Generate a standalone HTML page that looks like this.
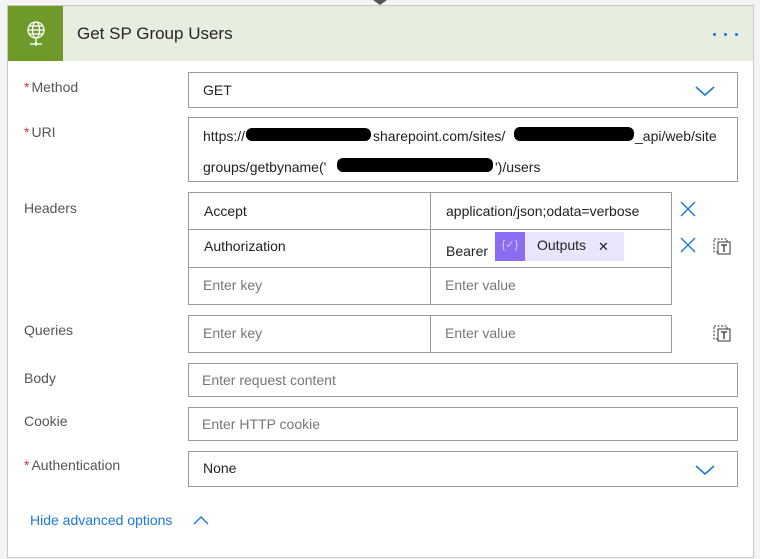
<!DOCTYPE html>
<html><head><style>
body{margin:0;width:760px;height:559px;background:#f4f4f4;font-family:"Segoe UI","Liberation Sans",sans-serif;font-size:14px;color:#333;position:relative;overflow:hidden}
.card{position:absolute;left:7px;top:5px;width:747px;height:553px;background:#fff;border:1px solid #c8c8c8;box-sizing:border-box}
.hdr{position:absolute;left:0;top:0;width:745px;height:55px;background:#e7eedf}
.ico{position:absolute;left:0;top:0;width:55px;height:55px;background:#6f9a2a}
.title{position:absolute;left:69px;top:18px;font-size:17px;color:#252525}
.dots{position:absolute;left:705px;top:27px;height:3px;line-height:0}
.dots i{display:inline-block;width:3px;height:3px;background:#1a7ad6;border-radius:50%;margin-right:8px;vertical-align:top}
.lbl{position:absolute;left:24px;font-size:14px;color:#555}
.lbl b{color:#d13438;font-weight:normal;margin-right:2px}
.box{position:absolute;left:188px;width:550px;border:1px solid #9a9a9a;box-sizing:border-box;background:#fff}
.t{position:absolute;font-size:14px;color:#222;white-space:pre}
.ph{color:#777}
.cell{position:absolute;border:1px solid #9a9a9a;box-sizing:border-box}
.blk{position:absolute;background:#000;border-radius:6px}
</style></head><body>
<div class="card">
 <div class="hdr">
  <div class="ico"><svg width="55" height="55" viewBox="0 0 55 55"><g fill="none" stroke="#fff" stroke-width="1.3"><circle cx="28" cy="24" r="8"/><ellipse cx="28" cy="24" rx="3.5" ry="8"/><line x1="20" y1="24" x2="36" y2="24"/><line x1="21" y1="20" x2="35" y2="20"/><line x1="21" y1="28" x2="35" y2="28"/><line x1="28" y1="32" x2="28" y2="37"/><line x1="22" y1="38" x2="34" y2="38"/></g><circle cx="28" cy="38" r="1.6" fill="#fff"/></svg></div>
  <div class="title">Get SP Group Users</div>
  <div class="dots"><i></i><i></i><i></i></div>
 </div>
</div>
<div class="lbl" style="top:79px"><b>*</b>Method</div>
<div class="box" style="top:72px;height:36px"><span class="t" style="left:14px;top:9px">GET</span>
<svg style="position:absolute;left:505px;top:11px" width="22" height="14"><polyline points="2,3 11,11 20,3" fill="none" stroke="#1a7ad6" stroke-width="1.6"/></svg></div>
<div class="lbl" style="top:124px"><b>*</b>URI</div>
<div class="box" style="top:117px;height:65px"><span class="t" style="left:14px;top:10px">https://</span><span class="t" style="left:184px;top:10px">sharepoint.com/sites/</span><span class="t" style="left:446px;top:10px">_api/web/site</span><span class="t" style="left:14px;top:41px">groups/getbyname('</span><span class="t" style="left:306px;top:41px">')/users</span></div>
<div class="blk" style="left:246px;top:128px;width:125px;height:13px"></div>
<div class="blk" style="left:514px;top:127px;width:120px;height:14px"></div>
<div class="blk" style="left:337px;top:158px;width:156px;height:14px"></div>
<div class="lbl" style="top:200px">Headers</div>
<div class="cell" style="left:188px;top:192px;width:243px;height:38px"><span class="t" style="left:15px;top:10px">Accept</span></div>
<div class="cell" style="left:430px;top:192px;width:242px;height:38px"><span class="t" style="left:15px;top:10px">application/json;odata=verbose</span></div>
<div class="cell" style="left:188px;top:229px;width:243px;height:39px"><span class="t" style="left:15px;top:8px">Authorization</span></div>
<div class="cell" style="left:430px;top:229px;width:242px;height:39px"><span class="t" style="left:15px;top:13px">Bearer</span>
<div style="position:absolute;left:64px;top:2px;width:129px;height:29px;background:#e9e5fd"><div style="position:absolute;left:0;top:0;width:30px;height:29px;background:#8c6cf0;color:#d8ccff;font-size:11px;text-align:center;line-height:27px">{✓}</div><span class="t" style="left:42px;top:5px">Outputs</span><span class="t" style="left:103px;top:7px;font-size:13px">✕</span></div></div>
<div class="cell" style="left:188px;top:267px;width:243px;height:38px"><span class="t ph" style="left:14px;top:9px">Enter key</span></div>
<div class="cell" style="left:430px;top:267px;width:242px;height:38px"><span class="t ph" style="left:14px;top:9px">Enter value</span></div>
<svg style="position:absolute;left:679px;top:200px" width="18" height="18"><path d="M2 2L16 16M16 2L2 16" stroke="#1a7ad6" stroke-width="1.4"/></svg>
<svg style="position:absolute;left:679px;top:236px" width="18" height="18"><path d="M2 2L16 16M16 2L2 16" stroke="#1a7ad6" stroke-width="1.4"/></svg>
<svg style="position:absolute;left:712px;top:236px" width="20" height="20"><rect x="2" y="3" width="13" height="13" fill="none" stroke="#333" stroke-dasharray="2,1.5"/><rect x="6" y="6" width="12" height="12" fill="#fff" stroke="#333"/><path d="M9 9H15M12 9V16" stroke="#333" stroke-width="1.3"/></svg>
<div class="lbl" style="top:322px">Queries</div>
<div class="cell" style="left:188px;top:315px;width:243px;height:38px"><span class="t ph" style="left:14px;top:9px">Enter key</span></div>
<div class="cell" style="left:430px;top:315px;width:242px;height:38px"><span class="t ph" style="left:14px;top:9px">Enter value</span></div>
<svg style="position:absolute;left:712px;top:323px" width="20" height="20"><rect x="2" y="3" width="13" height="13" fill="none" stroke="#333" stroke-dasharray="2,1.5"/><rect x="6" y="6" width="12" height="12" fill="#fff" stroke="#333"/><path d="M9 9H15M12 9V16" stroke="#333" stroke-width="1.3"/></svg>
<div class="lbl" style="top:370px">Body</div>
<div class="box" style="top:363px;height:34px"><span class="t ph" style="left:13px;top:8px">Enter request content</span></div>
<div class="lbl" style="top:413px">Cookie</div>
<div class="box" style="top:407px;height:34px"><span class="t ph" style="left:13px;top:8px">Enter HTTP cookie</span></div>
<div class="lbl" style="top:457px"><b>*</b>Authentication</div>
<div class="box" style="top:451px;height:36px"><span class="t" style="left:14px;top:8px">None</span>
<svg style="position:absolute;left:505px;top:11px" width="22" height="14"><polyline points="2,3 11,11 20,3" fill="none" stroke="#1a7ad6" stroke-width="1.6"/></svg></div>
<div style="position:absolute;left:30px;top:512px;color:#1a7ad6;font-size:14px">Hide advanced options</div>
<svg style="position:absolute;left:192px;top:514px" width="18" height="12"><polyline points="2,10 9,3 16,10" fill="none" stroke="#1a7ad6" stroke-width="1.4"/></svg>
<svg style="position:absolute;left:373px;top:0" width="14" height="6"><path d="M0 0L7 5L14 0Z" fill="#555"/></svg>
</body></html>
